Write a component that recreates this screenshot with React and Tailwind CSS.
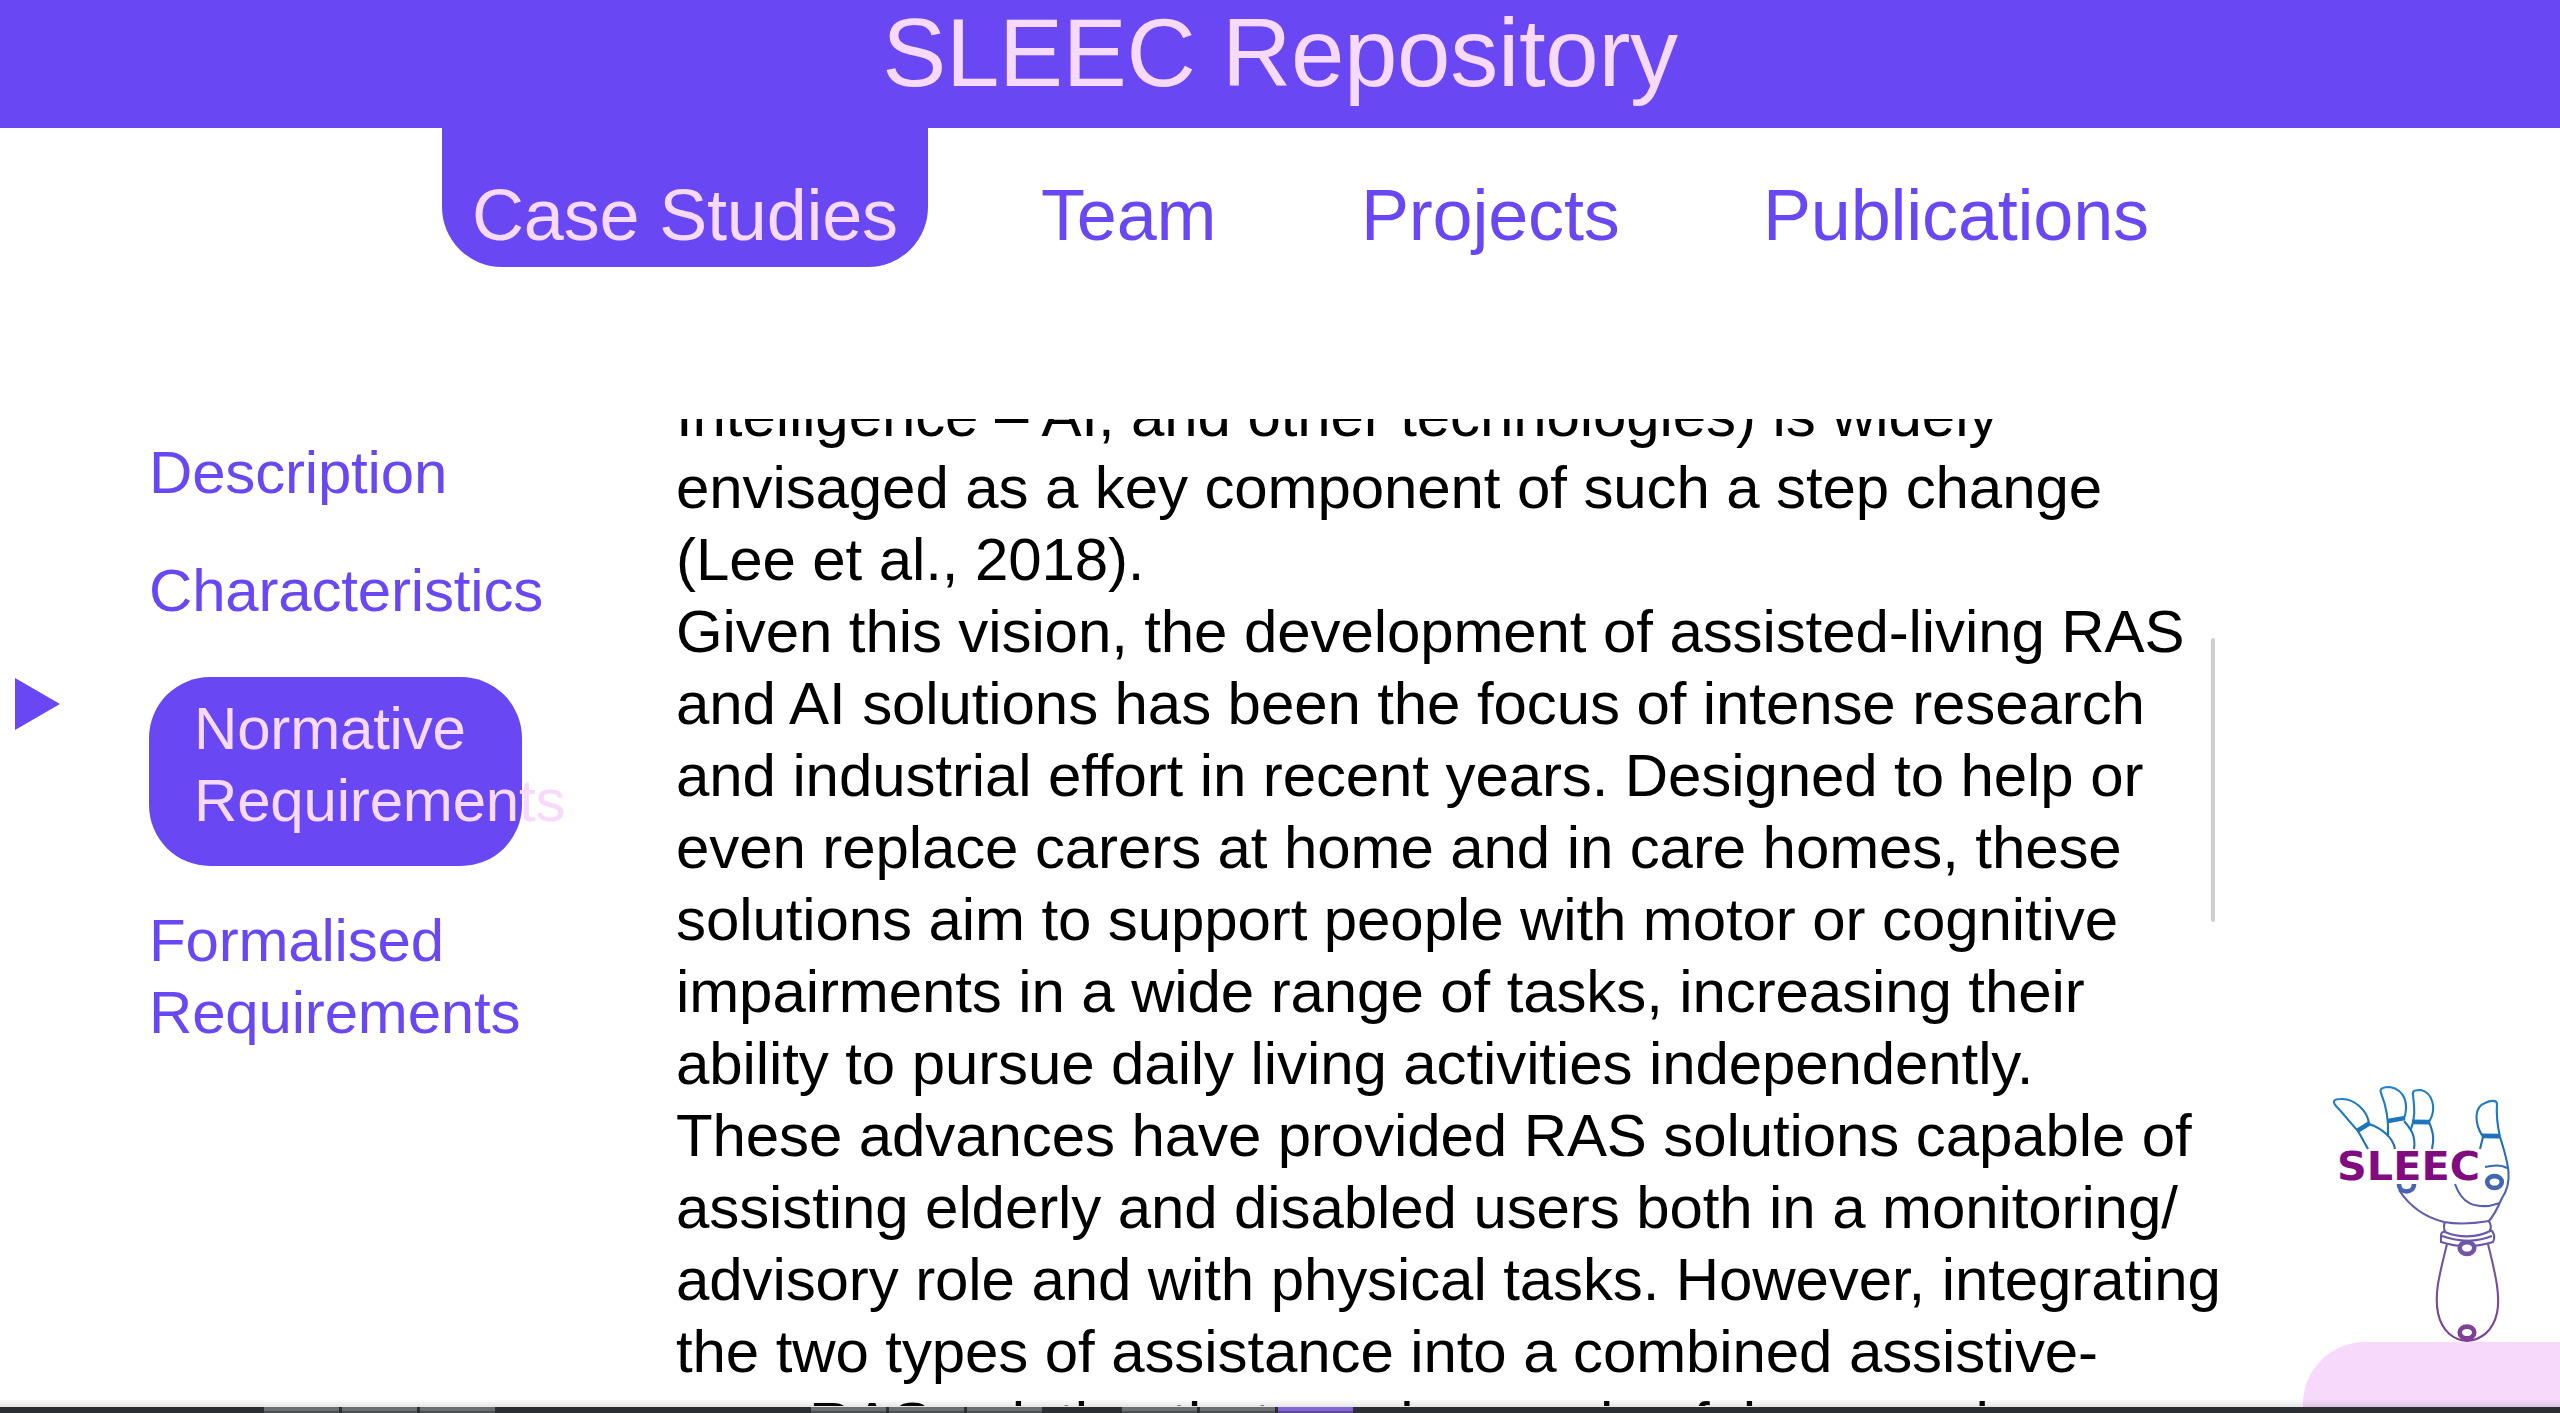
const bodyLines = [
  'Intelligence – AI, and other technologies) is widely',
  'envisaged as a key component of such a step change',
  '(Lee et al., 2018).',
  'Given this vision, the development of assisted-living RAS',
  'and AI solutions has been the focus of intense research',
  'and industrial effort in recent years. Designed to help or',
  'even replace carers at home and in care homes, these',
  'solutions aim to support people with motor or cognitive',
  'impairments in a wide range of tasks, increasing their',
  'ability to pursue daily living activities independently.',
  'These advances have provided RAS solutions capable of',
  'assisting elderly and disabled users both in a monitoring/',
  'advisory role and with physical tasks. However, integrating',
  'the two types of assistance into a combined assistive-',
  'care RAS solution that can be used safely around',
];

function Logo() {
  return (
    <svg viewBox="0 0 280 290" className="absolute left-[2280px] top-[1060px] h-[290px] w-[280px]" fill="none" strokeWidth="2.1">
      <defs>
        <linearGradient id="hand" gradientUnits="userSpaceOnUse" x1="0" y1="25" x2="0" y2="282">
          <stop offset="0" stopColor="#2384c9" />
          <stop offset="0.22" stopColor="#1c6fb8" />
          <stop offset="0.45" stopColor="#5560b0" />
          <stop offset="0.65" stopColor="#7454a4" />
          <stop offset="1" stopColor="#7d3f94" />
        </linearGradient>
      </defs>
      <g stroke="url(#hand)">
        <path d="M78 71C68 60 62 52 56 46C52 41 54 39 61 39C74 38 88 51 89 64M78 71L88 89M89 64C101 68 113 77 115 89" />
        <path d="M108 75C109 57 105 43 101 33C99 28 104 27 110 27C125 30 129 44 124 59M124 61C131 69 136 76 134 89" />
        <path d="M131 69C136 57 134 45 133 35C132 30 136 30 141 30C153 33 157 49 149 62C154 74 154 80 152 89" />
        <path d="M200 89L203 77C194 63 194 47 205 43C211 40 217 40 217 44C216 57 218 68 220 77C229 105 233 122 222 138C216 152 211 159 208 162M205 107C213 105 222 105 227 108M175 124C182 144 194 147 209 146L220 143" />
        <path d="M119 130C132 150 148 158 164 162C180 165 197 163 209 161" />
        <path d="M165 162Q163 166 165 172C179 178 197 178 210 171Q212 166 209 161M166 171Q161 172 161 175V182C179 188 197 187 213 182Q216 176 212 171L209 170M162 176C179 182 197 182 212 176" />
        <path d="M167 184C160 213 154 233 158 253C162 272 174 280 187 281C201 280 213 271 217 253C221 234 214 209 208 184" />
      </g>
      <g stroke="url(#hand)" strokeWidth="4.6">
        <path d="M77 71L90 63M108 61L125 58M132 61.9L150 62.1M202 75.9L220 76.1" />
        <ellipse cx="214.500" cy="122" rx="7.300" ry="5.900" />
        <ellipse cx="187" cy="188" rx="7.300" ry="5.900" fill="white" />
        <ellipse cx="187" cy="272.500" rx="7.300" ry="5.900" />
        <path d="M119 124C119 134 134 134 134 124" />
      </g>
      <text x="57" y="120" textLength="143" lengthAdjust="spacingAndGlyphs" fontFamily="DejaVu Sans" fontWeight="700" fontSize="39.500" fill="#800c80">SLEEC</text>
    </svg>
  );
}

const keys = [264, 342, 420, 811, 889, 967, 1122, 1200];

export default function App() {
  return (
    <div className="relative flex h-[1413px] w-[2560px] flex-col overflow-hidden bg-white font-['Liberation_Sans',sans-serif]">
      <header className="flex h-[128px] shrink-0 justify-center bg-[#6948f4] text-[#f6d9fb]">
        <h1 className="mt-[-5px] whitespace-nowrap text-[96px] leading-[116px] tracking-[-0.3px]">SLEEC Repository</h1>
      </header>
      <nav className="ml-[442px] flex h-[139px] shrink-0 text-[72px] leading-[90px] tracking-[-0.2px] text-[#6948f4]">
        <div className="flex w-[486px] items-end justify-center rounded-b-[60px] bg-[#6948f4] pb-[7px] text-[#f6d9fb]">Case Studies</div>
        <div className="flex items-end pb-[7px]">
          <span className="ml-[113px] w-[320px]">Team</span>
          <span className="w-[402px]">Projects</span>
          <span>Publications</span>
        </div>
      </nav>
      <div className="mt-[152px] flex h-[987px] shrink-0">
        <aside className="flex w-[676px] shrink-0 text-[60px] leading-[72px] tracking-[-0.18px] text-[#6948f4]">
          <div className="mt-[259px] ml-[15px] w-[134px]">
            <svg viewBox="0 0 45 52" className="h-[52px] w-[45px]"><path d="M0 0L45 26L0 52Z" fill="#6948f4" /></svg>
          </div>
          <div className="flex flex-col pt-[18px]">
            <span>Description</span>
            <span className="mt-[46px]">Characteristics</span>
            <div className="mt-[50px] h-[189px] w-[373px] rounded-[61px] bg-[#6948f4] pt-[16px] pl-[45px] text-[#f6d9fb]">Normative<br />Requirements</div>
            <span className="mt-[39px]">Formalised<br />Requirements</span>
          </div>
        </aside>
        <main className="h-[987px] w-[1600px] overflow-hidden text-[60px] leading-[72px] tracking-[-0.1px] text-black">
          <div className="-mt-[39px]">
            {bodyLines.map((line) => <p key={line} className="whitespace-nowrap">{line}</p>)}
          </div>
        </main>
      </div>
      <div className="absolute left-[2211px] top-[638px] h-[284px] w-[4px] rounded-full bg-[#cecece]" />
      <Logo />
      <div className="absolute left-[2303px] top-[1342px] h-[80px] w-[300px] rounded-tl-[62px] bg-[#f6d9fb]" />
      <div className="absolute left-0 top-[1399px] h-[8px] w-full bg-linear-to-b from-black/0 to-black/10" />
      <div className="absolute left-0 top-[1407px] h-[6px] w-full bg-[#2b2e33]">
        {keys.map((x) => <div key={x} className="absolute top-0 h-[6px] w-[75px] border-b-2 border-[#4c5054] bg-[#6a6f71]" style={{ left: x }} />)}
        <div className="absolute left-[1278px] top-0 h-[6px] w-[75px] border-b-2 border-[#5c4a8c] bg-[#8465d8]" />
      </div>
    </div>
  );
}
